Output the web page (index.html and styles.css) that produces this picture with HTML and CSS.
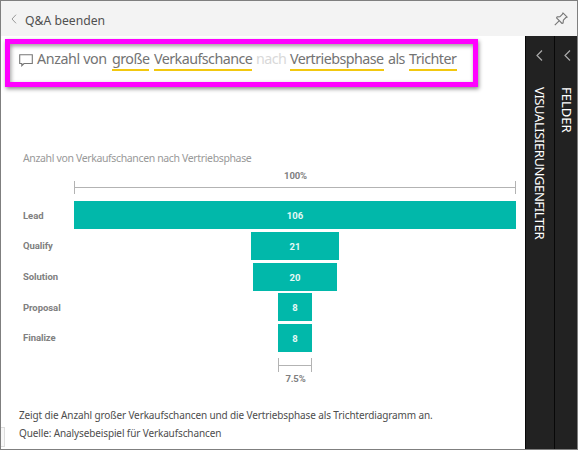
FILE: index.html
```html
<!DOCTYPE html>
<html lang="de">
<head>
<meta charset="utf-8">
<title>Q&amp;A</title>
<link rel="stylesheet" href="styles.css">
</head>
<body>
<div class="window">
  <header class="topbar">
    <svg class="back" width="6" height="10" viewBox="0 0 6 10"><path d="M5 .7L1 5l4 4.3"/></svg>
    <span class="exit">Q&amp;A beenden</span>
    <svg class="pin" width="14" height="14" viewBox="0 0 14 14"><path d="M8.9.9l4.3 4.3-1.3.3-2.5 2.6-.3 3-1 .4-5.6-5.6.5-1 3-.2 2.5-2.6zM5.1 8.9L.8 13.2"/></svg>
  </header>
  <div class="body">
    <main class="main">
      <div class="question">
        <svg class="bubble" width="15" height="13" viewBox="0 0 15 13"><path d="M.7.8h12.6v8.7H5L2.8 11.7V9.5H.7z"/></svg>
        <span class="word w1">Anzahl von</span>
        <span class="word w2 term">große</span>
        <span class="word w3 term">Verkaufschance</span>
        <span class="word w4 faint">nach</span>
        <span class="word w5 term">Vertriebsphase</span>
        <span class="word w6">als</span>
        <span class="word w7 term">Trichter</span>
      </div>
      <h1 class="title">Anzahl von Verkaufschancen nach Vertriebsphase</h1>
      <section class="funnel">
        <div class="percent">100%</div>
        <div class="bracket full"></div>
        <div class="rows">
          <span class="label">Lead</span><div class="bar" style="width:442px">106</div>
          <span class="label">Qualify</span><div class="bar" style="width:87.6px">21</div>
          <span class="label">Solution</span><div class="bar" style="width:83.4px">20</div>
          <span class="label">Proposal</span><div class="bar" style="width:34px">8</div>
          <span class="label">Finalize</span><div class="bar" style="width:34px">8</div>
        </div>
        <div class="bracket small"></div>
        <div class="percent">7.5%</div>
      </section>
      <footer class="notes">
        <p class="n1">Zeigt die Anzahl großer Verkaufschancen und die Vertriebsphase als Trichterdiagramm an.</p>
        <p class="n2">Quelle: Analysebeispiel für Verkaufschancen</p>
      </footer>
      <div class="handle"></div>
    </main>
    <aside class="pane filters">
      <svg width="7" height="11" viewBox="0 0 7 11"><path d="M6 .5L1 5.5l5 5"/></svg>
      <span>VISUALISIERUNGENFILTER</span>
    </aside>
    <aside class="pane fields">
      <svg width="7" height="11" viewBox="0 0 7 11"><path d="M6 .5L1 5.5l5 5"/></svg>
      <span>FELDER</span>
    </aside>
  </div>
</div>
</body>
</html>
```
FILE: styles.css
```css
* { box-sizing: border-box; }
body { margin: 0; font-family: "Noto Sans", "Open Sans", sans-serif; background: #fff; }
svg { display: block; fill: none; flex: none; }
.window { width: 578px; height: 450px; border: 1px solid #7f7f7f; display: flex; flex-direction: column; overflow: hidden; }
.topbar { height: 35px; flex: none; background: #f3f3f3; display: flex; align-items: center; padding: 0 9px 0 10px; }
.back { stroke: #999; }
.exit { margin-left: 8px; margin-top: 4px; font-size: 12.2px; letter-spacing: 0; color: #505050; white-space: nowrap; }
.pin { stroke: #777; stroke-width: 1.1; stroke-linejoin: round; margin-left: auto; }
.body { flex: 1; display: flex; min-height: 0; }
.main { width: 524px; flex: none; position: relative; display: flex; flex-direction: column; }
.question { width: 473px; height: 48px; margin: 3px 0 0 4px; border: 5px solid #f0f; box-shadow: 1px 2px 4px rgba(0,0,0,.45), inset 1px 2px 4px rgba(0,0,0,.4); display: flex; padding: 5px 0 0 9px; flex: none; }
.bubble { stroke: #777; stroke-width: 1.1; margin: 5px 3px 0 0; }
.word { height: 22px; line-height: 20px; font-size: 14.3px; letter-spacing: -.55px; color: #737373; white-space: nowrap; flex: none; }
.term { border-bottom: 2px solid #f2c80f; }
.faint { color: #d9d9d9; }
.w1 { width: 70px; margin-right: 5px; letter-spacing: -.4px; }
.w2 { width: 37px; margin-right: 5px; }
.w3 { width: 98px; margin-right: 4px; }
.w4 { width: 30px; margin-right: 4px; }
.w5 { width: 94px; margin-right: 4px; }
.w6 { width: 17px; margin-right: 4px; }
.w7 { width: 48px; }
.title { margin: 62px 0 0 22px; height: 18px; line-height: 18px; font-size: 10.5px; font-weight: 400; letter-spacing: -.36px; color: #999; white-space: nowrap; flex: none; }
.funnel { margin-left: 22px; width: 493px; font-family: Roboto, sans-serif; font-weight: 700; font-size: 9.5px; color: #808080; }
.percent { margin-left: 52px; text-align: center; height: 12px; line-height: 13px; letter-spacing: -.15px; }
.funnel > .percent:first-child { margin-top: 2px; }
.bracket { height: 13px; border: solid #b3b3b3; border-width: 0 1px; display: flex; align-items: center; }
.bracket::after { content: ""; flex: 1; height: 1px; background: #b3b3b3; }
.full { margin: 0 0 7.3px 51px; }
.small { width: 34px; margin: 6.2px 0 0 255px; height: 14px; }
.rows { display: grid; grid-template-columns: 51px 442px; grid-auto-rows: 28px; row-gap: 2.65px; align-items: center; }
.label { letter-spacing: -.05px; }
.bar { justify-self: center; height: 28px; line-height: 29px; background: #01b8aa; color: #e6f8f6; text-align: center; }
.notes { margin: 21.5px 0 0 18px; font-size: 10px; line-height: 18px; letter-spacing: -.12px; color: #4d4d4d; white-space: nowrap; }
.notes p { margin: 0; }
.handle { position: absolute; left: 0; bottom: 2px; width: 4px; height: 20px; border: 1px solid #ddd; border-left: 0; background: #f8f8f8; }
.pane { flex: none; background: #222; border-left: 1px solid #080808; color: #fff; display: flex; flex-direction: column; align-items: center; padding-top: 14px; }
.pane svg { stroke: #aaa; stroke-width: 1.2; }
.pane span { margin-top: 26px; writing-mode: vertical-rl; font-size: 13px; line-height: 18px; white-space: nowrap; }
.filters { width: 29px; }
.filters svg { margin-right: 1px; }
.filters span { letter-spacing: -.42px; }
.fields { width: 23px; padding-left: 1px; }
.fields svg { margin-left: 2px; }
```
